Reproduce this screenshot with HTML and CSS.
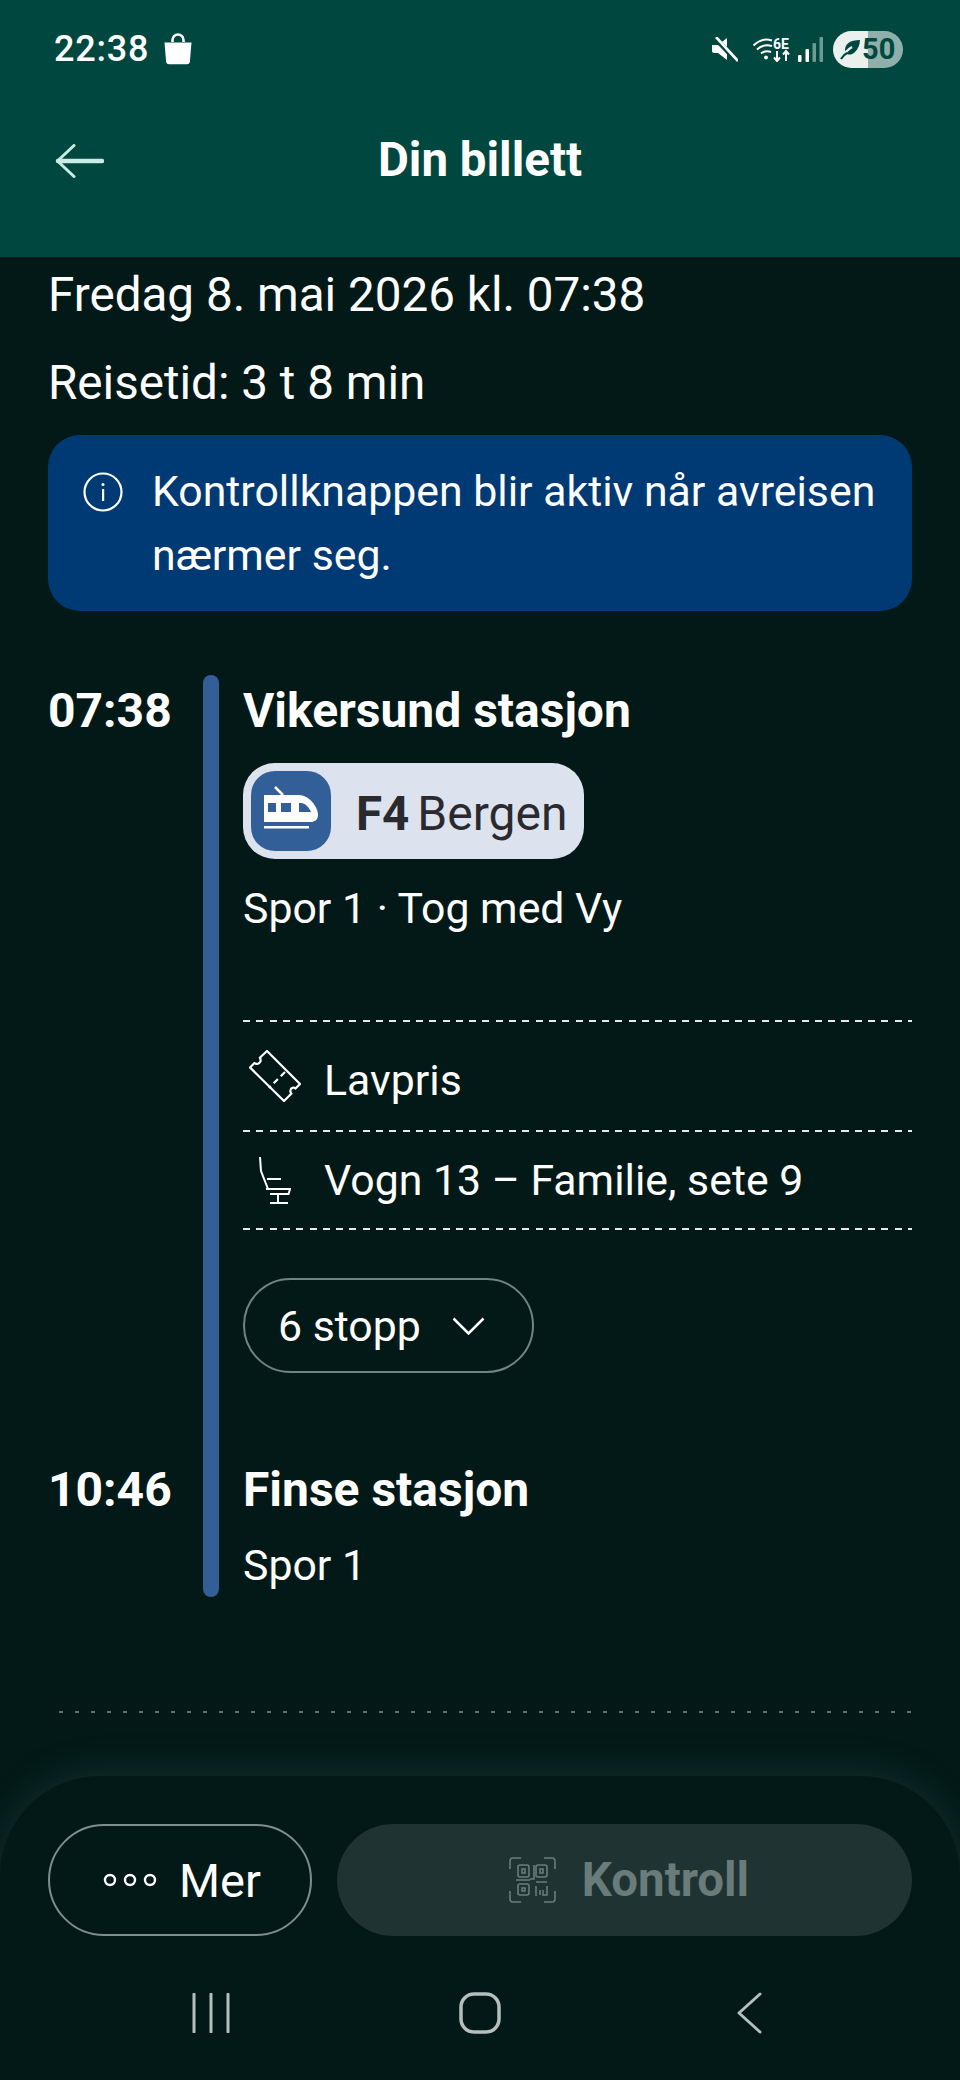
FILE: index.html
```html
<!DOCTYPE html>
<html lang="nb">
<head>
<meta charset="utf-8">
<title>Din billett</title>
<link rel="stylesheet" href="styles.css">
</head>
<body>
<div class="screen">
  <header class="top">
    <div class="status">
      <div class="status-left">
        <span class="clock">22:38</span>
        <svg class="bag" viewBox="0 0 30 32"><path d="M9.500 9V7a5.500 5.500 0 0 1 11 0v2" fill="none" stroke="#fff" stroke-width="2.600"/><path d="M1.500 9.500h27l-1.600 19a3 3 0 0 1-3 2.700H6.100a3 3 0 0 1-3-2.700z" fill="#fff"/></svg>
      </div>
      <div class="status-right">
        <svg class="mute" viewBox="0 0 26 25"><path d="M0 8h6l9-7v22l-9-7H2a2 2 0 0 1-2-2z" fill="#fff"/><path d="M3 1l22 23" stroke="#004740" stroke-width="5"/><path d="M4 0l22 24" stroke="#fff" stroke-width="2.600"/></svg>
        <svg class="wifi" viewBox="0 0 38 25"><g fill="none" stroke="#fff" stroke-width="2"><path d="M0.500 8.500C6 3 13 1.500 19 3.500"/><path d="M4 12.500C9 8 14 7.500 19 9"/><path d="M8 16.500c3-2.500 6-3 10-1.500"/></g><circle cx="13" cy="20.500" r="1.900" fill="#fff"/><text class="wifi-label" x="20" y="11.500">6E</text><path d="M24 14v10m-3-3.500l3 3.500 3-3.500M33 24v-10m-3 3.500l3-3.500 3 3.500" fill="none" stroke="#fff" stroke-width="2"/></svg>
        <svg class="signal" viewBox="0 0 25 25"><rect x="0" y="18" width="3.500" height="7" rx="1" fill="#fff"/><rect x="7.500" y="12" width="3.500" height="13" rx="1" fill="#fff"/><rect x="14.500" y="6" width="3.500" height="19" rx="1" fill="#6f9a93"/><rect x="21.500" y="0" width="3.500" height="25" rx="1" fill="#6f9a93"/></svg>
        <div class="battery">
          <svg class="leaf" viewBox="0 0 22 22"><path d="M20 2C10 2 5 6 5 12c0 2 1 3 2 4 2 1 5 1 8-2 3-3 5-8 5-12z" fill="#004740"/><path d="M1 21c3-6 6-9 11-12" fill="none" stroke="#eaf0ee" stroke-width="2.200"/><path d="M1 21c2-3 4-5 6-6" fill="none" stroke="#004740" stroke-width="2.200"/></svg>
          <span class="battery-level">50</span>
        </div>
      </div>
    </div>
    <div class="bar-title">
      <svg class="back" viewBox="0 0 49 34"><path d="M47 17H3" fill="none" stroke="#c8ece3" stroke-width="4.500" stroke-linecap="round"/><path d="M19 1.500L2.500 17 19 32.500" fill="none" stroke="#c8ece3" stroke-width="3" stroke-linecap="round" stroke-linejoin="round"/></svg>
      <h1>Din billett</h1>
    </div>
  </header>

  <main class="content">
    <p class="line">Fredag 8. mai 2026 kl. 07:38</p>
    <p class="line line-gap">Reisetid: 3 t 8 min</p>

    <div class="notice">
      <svg class="notice-icon" viewBox="0 0 40 40"><circle cx="20" cy="20" r="18.500" fill="none" stroke="#fff" stroke-width="2.200"/><rect x="19" y="17" width="2.200" height="12" fill="#fff"/><circle cx="20" cy="12.500" r="1.500" fill="#fff"/></svg>
      <p>Kontrollknappen blir aktiv når avreisen nærmer seg.</p>
    </div>

    <section class="trip">
      <div class="rail"></div>
      <div class="time time-first">07:38</div>
      <div class="leg">
        <h2 class="station station-first">Vikersund stasjon</h2>
        <div class="chip">
          <svg class="chip-icon" viewBox="0 0 80 80"><rect width="80" height="80" rx="24" fill="#335f99"/><path d="M24 16l8 8" stroke="#fff" stroke-width="2.500"/><path d="M13 24H48C58 24 67 36 67 44c0 5-4 7-7 7H13z" fill="#fff"/><path d="M17 32h8v9h-8zM30 32h10v9H30zM48 32h2c4 0 8 4 10 9H48z" fill="#335f99"/><rect x="13" y="55" width="45" height="2.500" fill="#fff"/></svg>
          <span class="chip-text"><b>F4</b><span class="chip-dest">Bergen</span></span>
        </div>
        <p class="leg-info">Spor 1 · Tog med Vy</p>
        <div class="dash dash-first"></div>
        <div class="detail detail-ticket">
          <span class="detail-icon">
            <svg class="ticket" viewBox="0 0 52 52"><path d="M18 1l33 33-4.500 4.500c-2-1.500-4.500-.7-5 1.500-.4 1.500 0 2.700 1 3.500L35 51 1 17.500l4.500-4.500c1.500 1.200 3.800 1 5-.3 1.300-1.300 1.300-3.500.3-5z" fill="none" stroke="#fff" stroke-width="2.200" stroke-linejoin="round"/><path d="M36 22L20 38" stroke="#fff" stroke-width="2.200" stroke-dasharray="6 4"/></svg>
          </span>
          <span>Lavpris</span>
        </div>
        <div class="dash"></div>
        <div class="detail detail-seat">
          <span class="detail-icon">
            <svg class="seat" viewBox="0 0 33 48"><path d="M2 1l1 14 7 18" fill="none" stroke="#fff" stroke-width="2"/><path d="M9 23h14M8 33h24l-1.500 5H12" fill="none" stroke="#fff" stroke-width="2"/><path d="M20 38v9M12 47h18" fill="none" stroke="#fff" stroke-width="2"/></svg>
          </span>
          <span>Vogn 13 – Familie, sete 9</span>
        </div>
        <div class="dash"></div>
        <button class="stops">6 stopp
          <svg class="chevron" viewBox="0 0 33 18"><path d="M1.500 1.500L16.500 16.500 31.500 1.500" fill="none" stroke="#fff" stroke-width="2.500"/></svg>
        </button>
      </div>
      <div class="time time-last">10:46</div>
      <div class="leg leg-last">
        <h2 class="station">Finse stasjon</h2>
        <p class="leg-info">Spor 1</p>
      </div>
    </section>

    <div class="dots-line"></div>
  </main>

  <footer class="sheet">
    <div class="actions">
      <button class="btn-more">
        <svg class="more-dots" viewBox="0 0 54 14"><g fill="none" stroke="#fff" stroke-width="2.400"><circle cx="7" cy="7" r="5"/><circle cx="27" cy="7" r="5"/><circle cx="47" cy="7" r="5"/></g></svg>
        Mer
      </button>
      <button class="btn-control">
        <svg class="qr" viewBox="0 0 47 46"><g fill="none" stroke="#697c7a" stroke-width="1.600"><path d="M1 12V4a3 3 0 0 1 3-3h8M35 1h8a3 3 0 0 1 3 3v8M46 34v8a3 3 0 0 1-3 3h-8M12 45H4a3 3 0 0 1-3-3v-8"/><rect x="9" y="8" width="11" height="12" rx="2"/><rect x="27" y="8" width="11" height="12" rx="2"/><rect x="9" y="27" width="11" height="11" rx="2"/><path d="M13 12h3v4h-3zM31 12h3v4h-3zM13 31h3v3h-3zM7 23h14M25 8v14h-4M27 25h11M38 29v9h-4v-5M27 29v10M31 33v5"/></g></svg>
        Kontroll
      </button>
    </div>
    <nav class="nav">
      <svg class="nav-recents" viewBox="0 0 38 40"><path d="M2 1v38M19 1v38M36 1v38" stroke="#b5bfbd" stroke-width="3" stroke-linecap="round"/></svg>
      <svg class="nav-home" viewBox="0 0 42 42"><rect x="2" y="2" width="38" height="38" rx="13" fill="none" stroke="#b5bfbd" stroke-width="3.500"/></svg>
      <svg class="nav-back" viewBox="0 0 25 42"><path d="M23 2L2 21l21 19" fill="none" stroke="#b5bfbd" stroke-width="3" stroke-linecap="round" stroke-linejoin="round"/></svg>
    </nav>
  </footer>
</div>
</body>
</html>
```
FILE: styles.css
```css
* { box-sizing: border-box; }
html, body { margin: 0; padding: 0; }
body { background: #021917; font-family: Roboto, "Noto Sans", sans-serif; color: #fff; }
p, h1, h2 { margin: 0; }
svg { display: block; flex: none; }

.screen { width: 960px; height: 2080px; display: flex; flex-direction: column; overflow: hidden; background: #021917; }

.top { height: 257px; flex: none; background: #004740; }
.status { height: 98px; padding: 0 57px 0 54px; display: flex; justify-content: space-between; align-items: center; }
.status-left { display: flex; align-items: center; gap: 14px; }
.clock { font-size: 36px; line-height: 40px; font-weight: 500; letter-spacing: .8px; }
.bag { width: 30px; height: 32px; }
.status-right { display: flex; align-items: center; }
.mute { width: 26px; height: 25px; margin-right: 15px; }
.wifi { width: 38px; height: 25px; margin-right: 7px; }
.wifi-label { font-family: Roboto, sans-serif; font-size: 14px; font-weight: 700; fill: #fff; }
.signal { width: 25px; height: 25px; margin-right: 10px; }
.battery { width: 70px; height: 37px; border-radius: 19px; background: linear-gradient(90deg, #eaf0ee 50%, #8fb0aa 50%); display: flex; align-items: center; padding-left: 7px; color: #004740; }
.leaf { width: 22px; height: 22px; }
.battery-level { font-size: 29px; font-weight: 700; line-height: 37px; margin-left: 0; }

.bar-title { position: relative; height: 126px; display: flex; align-items: center; justify-content: center; }
.back { position: absolute; left: 55px; top: 46px; width: 49px; height: 34px; }
.bar-title h1 { font-size: 47.500px; line-height: 56px; font-weight: 700; margin-top: -2px; }

.content { padding: 10px 48px 0; flex: 1; }
.line { font-size: 47.600px; line-height: 56px; }
.line-gap { margin-top: 32px; }

.notice { margin-top: 24px; height: 176px; border-radius: 32px; background: #003a75; padding: 30px 20px 0 35px; display: flex; }
.notice-icon { width: 40px; height: 40px; margin: 7px 29px 0 0; }
.notice p { font-size: 42.800px; line-height: 64px; margin-top: -6px; }

.trip { margin-top: 64px; display: grid; grid-template-columns: 155px 16px 1fr; column-gap: 0; }
.rail { grid-column: 2; grid-row: 1 / 3; background: #335f99; border-radius: 8px; }
.time { grid-column: 1; font-size: 48px; line-height: 56px; font-weight: 700; }
.time-first { grid-row: 1; padding-top: 8px; }
.time-last { grid-row: 2; padding-top: 89px; }
.leg { grid-column: 3; padding-left: 24px; grid-row: 1; }
.leg-last { grid-row: 2; padding-top: 89px; padding-bottom: 4px; }
.station { font-size: 48px; line-height: 56px; font-weight: 700; }
.station-first { padding-top: 8px; }

.chip { margin-top: 24px; width: 341px; height: 96px; border-radius: 32px; background: #dde3ee; display: flex; align-items: center; padding-left: 8px; gap: 25px; color: #2a2a2e; }
.chip-icon { width: 80px; height: 80px; }
.chip-text { font-size: 47.500px; line-height: 56px; margin-top: 5px; display: flex; gap: 8px; }
.chip-text b { font-weight: 700; }
.chip-dest { font-size: 48px; }

.leg-info { font-size: 42.800px; line-height: 56px; margin-top: 21px; }
.leg-last .leg-info { margin-top: 19px; }

.dash { height: 2px; background: repeating-linear-gradient(90deg, #e6ebea 0 7px, transparent 7px 13.300px); }
.dash-first { margin-top: 84px; }
.detail { display: flex; align-items: center; font-size: 42.800px; line-height: 56px; }
.detail-ticket { height: 108px; padding-top: 8px; }
.detail-ticket .detail-icon { margin-top: -8px; }
.detail-seat { height: 96px; }
.detail-icon { width: 81px; display: flex; justify-content: flex-start; }
.ticket { width: 52px; height: 52px; margin-left: 6px; }
.seat { width: 33px; height: 48px; margin-left: 15px; }

.stops { margin-top: 48px; width: 291px; height: 95px; border: 2px solid #6f8583; border-radius: 48px; background: transparent; color: #fff; font: inherit; font-size: 42.800px; display: flex; align-items: center; padding: 0 0 0 33px; }
.chevron { width: 33px; height: 18px; margin-left: 31px; }

.dots-line { margin: 114px 0 0 11px; height: 2px; background: repeating-linear-gradient(90deg, #5c7370 0 4px, transparent 4px 16px); }

.sheet { flex: none; height: 304px; background: #021917; border-radius: 100px 100px 0 0; box-shadow: 0 -4px 36px rgba(70, 105, 98, .28); padding: 48px 48px 0; }
.actions { display: flex; gap: 25px; }
.btn-more, .btn-control { height: 112px; border-radius: 56px; display: flex; align-items: center; justify-content: center; font: inherit; font-size: 47px; }
.btn-more { width: 264px; border: 2px solid #7b8f8c; background: transparent; color: #fff; gap: 22px; padding: 0 0 0 4px; }
.more-dots { width: 54px; height: 14px; }
.btn-control { flex: 1; border: 0; background: #1f3432; color: #697c7a; font-weight: 700; gap: 26px; font-size: 47.400px; padding: 0 0 0 9px; }
.qr { width: 47px; height: 46px; }

.nav { margin: 56px -48px 0; display: grid; grid-template-columns: repeat(3, 269px); justify-content: center; justify-items: center; align-items: center; }
.nav-recents { width: 38px; height: 40px; }
.nav-home { width: 42px; height: 42px; }
.nav-back { width: 25px; height: 42px; }
```
